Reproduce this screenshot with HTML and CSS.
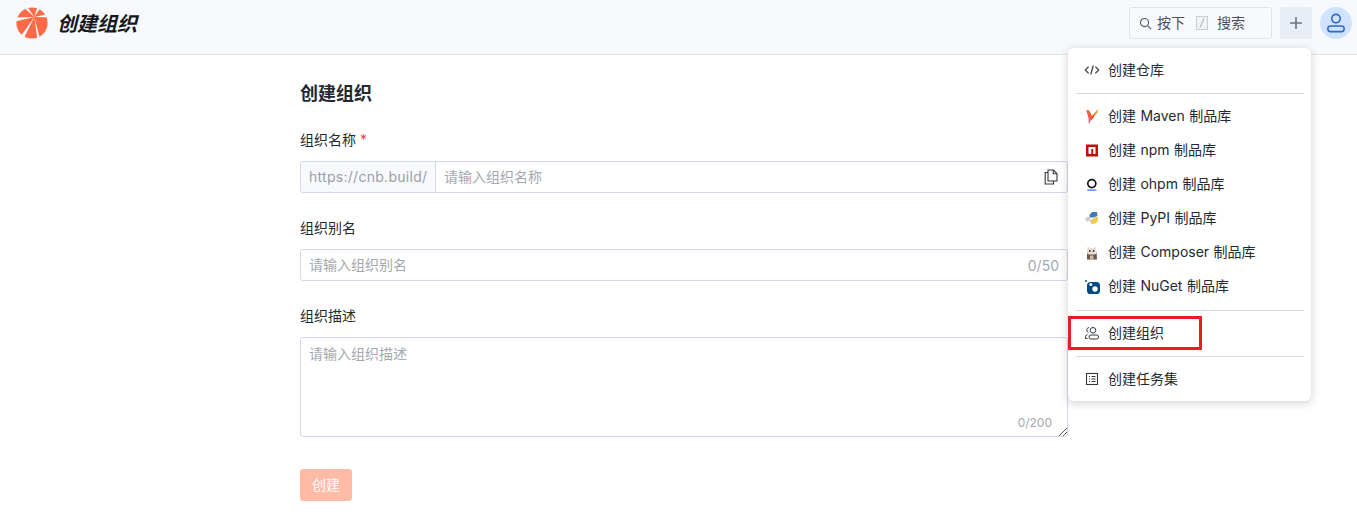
FILE: index.html
```html
<!DOCTYPE html>
<html lang="zh-CN">
<head>
<meta charset="utf-8">
<title>创建组织</title>
<link rel="stylesheet" href="styles.css">
</head>
<body>
<header class="topbar">
  <div class="brand">
    <svg class="logo" viewBox="0 0 32 32" width="32" height="32">
      <circle cx="16" cy="16" r="15.6" fill="#ff6b47"/>
      <g fill="#f7f9fd">
        <path d="M18.3 10 7.6 .2 11.2 -.4z"/>
        <path d="M18.3 10 21.4 -.2 24.4 .8z"/>
        <path d="M18.3 10 30.8 7.2 32.2 10.2z"/>
        <path d="M18.3 10 21.4 32 23.8 31.6z"/>
        <path d="M18.3 10 5.4 28.6 8.2 30.6z"/>
        <path d="M18.3 10 -.6 10.4 -.6 14.4z"/>
      </g>
    </svg>
    <span class="brand-title">创建组织</span>
  </div>
  <div class="actions">
    <div class="search">
      <svg viewBox="0 0 16 16" width="13" height="13" fill="none" stroke="#555b66" stroke-width="1.4"><circle cx="6.8" cy="6.8" r="5"/><path d="M10.6 10.6 15 15"/></svg>
      <span class="search-text">按下</span>
      <span class="slash"><svg viewBox="0 0 12 14" width="10" height="12" stroke="#9aa0a8" stroke-width="1"><path d="M3.5 12.5 8.5 1.5"/></svg></span>
      <span class="search-text">搜索</span>
    </div>
    <button class="plus" type="button">
      <svg viewBox="0 0 14 14" width="14" height="14" stroke="#6b7280" stroke-width="1.6"><path d="M7 1v12M1 7h12"/></svg>
    </button>
    <div class="avatar">
      <svg viewBox="0 0 20 20" width="20" height="20" fill="none" stroke="#2f69c9" stroke-width="1.6"><circle cx="10" cy="5.6" r="4.2"/><rect x="1.8" y="13" width="16.4" height="5.6" rx="2.8"/></svg>
    </div>
  </div>
</header>

<main class="page">
  <form class="form">
    <h1 class="form-title">创建组织</h1>
    <div class="field">
      <label class="label">组织名称 <em class="req">*</em></label>
      <div class="input url">
        <span class="prefix">https://cnb.build/</span>
        <span class="ph grow pad">请输入组织名称</span>
        <svg class="copy" viewBox="0 0 14 16" width="14" height="16" fill="none" stroke="#33383f" stroke-width="1.1"><path d="M4 1h5.5L13 4.6V12H4z"/><path d="M9.3 1v3.8H13"/><path d="M4 3.5H1.2V15H9.5v-3"/></svg>
      </div>
    </div>
    <div class="field">
      <label class="label">组织别名</label>
      <div class="input">
        <span class="ph grow pad">请输入组织别名</span>
        <span class="count">0/50</span>
      </div>
    </div>
    <div class="field">
      <label class="label">组织描述</label>
      <div class="textarea">
        <span class="ph">请输入组织描述</span>
        <span class="count-small">0/200</span>
        <svg class="grip" viewBox="0 0 9 9" width="9" height="9" stroke="#555" stroke-width="1"><path d="M1 9 9 1M5 9l4-4"/></svg>
      </div>
    </div>
    <button class="submit" type="button">创建</button>
  </form>
</main>

<nav class="menu">
  <a class="item">
    <svg viewBox="0 0 16 16" width="16" height="16" fill="none" stroke="#33383f" stroke-width="1.2"><path d="M4.6 4.6 1.4 8l3.2 3.4M11.4 4.6 14.6 8l-3.2 3.4M9.3 3.5 6.7 12.5"/></svg>
    <span>创建仓库</span>
  </a>
  <hr class="sep">
  <a class="item">
    <svg viewBox="0 0 16 16" width="16" height="16"><path fill="#e8603c" d="M2.2 2 5 2.2 8.4 8.5 6.8 12 4.8 11z"/><path fill="#d9628f" d="M4.6 10.5 6.8 11.5 5.6 15.5 4.6 15z"/><path fill="#ef9a3a" d="M14 1 13.4 4.6 7 12.4 6.4 9.6z"/><path fill="#e5484d" d="M11.2 5.2 9.4 9.8 7 12.4 6.6 9.8z"/></svg>
    <span>创建 Maven 制品库</span>
  </a>
  <a class="item">
    <svg viewBox="0 0 16 16" width="16" height="16"><rect x="2" y="2.5" width="12" height="12" fill="#c90a0d"/><path fill="#fff" d="M4.5 5h7v7H9.2V7H7.3v5H4.5z"/></svg>
    <span>创建 npm 制品库</span>
  </a>
  <a class="item">
    <svg viewBox="0 0 16 16" width="16" height="16"><circle cx="7.8" cy="7.6" r="4" fill="none" stroke="#111" stroke-width="1.7"/><rect x="3.2" y="13.4" width="9.2" height="1.5" fill="#5b8cf5"/></svg>
    <span>创建 ohpm 制品库</span>
  </a>
  <a class="item">
    <svg viewBox="0 0 16 16" width="16" height="16"><path fill="#c9ccd0" d="M1 8.5 4 6.5h3l-1 3.5-3 2z"/><path fill="#3f7cb5" d="M5.5 4.5 8.5 2h4.5l.5 4-4 1.5H6z"/><path fill="#f2c94c" d="M8 9 13 6.5l1.2 1.5-.8 4-3.4 2-3.5-.5z"/><path fill="#9fb4c9" d="M6 10h2l-1 3z"/></svg>
    <span>创建 PyPI 制品库</span>
  </a>
  <a class="item">
    <svg viewBox="0 0 16 16" width="16" height="16"><path fill="#6e5548" d="M3 8.5h9.5l.5 7H3z"/><path fill="#e8dfd4" d="M3.5 2.5 6 4h3.5l2.5-1.5.5 5.5a2.4 2.4 0 0 1-2.4 2.5H5.4A2.4 2.4 0 0 1 3 8z"/><circle cx="5.9" cy="7" r=".9" fill="#3a2c25"/><circle cx="9.6" cy="7" r=".9" fill="#3a2c25"/><rect x="6" y="11.5" width="3.5" height="3.5" fill="#c9b8a6"/></svg>
    <span>创建 Composer 制品库</span>
  </a>
  <a class="item">
    <svg viewBox="0 0 16 16" width="16" height="16"><rect x="3" y="4" width="13" height="12" rx="3.6" fill="#004880"/><circle cx="2" cy="3" r="1" fill="#004880"/><circle cx="6.8" cy="6.6" r="1.5" fill="#fff"/><circle cx="11" cy="11" r="2.7" fill="#fff"/></svg>
    <span>创建 NuGet 制品库</span>
  </a>
  <hr class="sep sep-mid">
  <a class="item">
    <svg viewBox="0 0 16 16" width="16" height="16" fill="none" stroke="#33383f" stroke-width="1"><circle cx="9" cy="5.3" r="2.8"/><rect x="5" y="10" width="9.5" height="4" rx="2"/><path d="M5 2.5a2.6 2.6 0 0 0-.6 5M3.5 9.6a2.2 2.2 0 0 0-2 2.2v1.7h2"/></svg>
    <span>创建组织</span>
  </a>
  <hr class="sep">
  <a class="item">
    <svg viewBox="0 0 16 16" width="16" height="16" fill="none" stroke="#33383f" stroke-width="1.1"><rect x="2.5" y="2.5" width="11" height="11"/><path d="M5 5.5h1M7.5 5.5h4M5 8h1M7.5 8h4M5 10.5h1M7.5 10.5h4"/></svg>
    <span>创建任务集</span>
  </a>
</nav>
<div class="highlight"></div>
</body>
</html>
```
FILE: styles.css
```css
* { box-sizing: border-box; }
html, body { margin: 0; padding: 0; }
body {
  height: 517px;
  overflow: hidden;
  background: #fff;
  color: #24292f;
  font-family: Inter, "Noto Sans CJK SC", sans-serif;
  font-size: 14px;
  position: relative;
}
.topbar {
  height: 55px;
  background: #f7f9fd;
  border-bottom: 1px solid #dfe3ea;
  display: flex;
  align-items: center;
  justify-content: space-between;
  padding: 0 5px 8px 16px;
}
.brand { display: flex; align-items: center; gap: 9px; }
.logo { display: block; }
.brand-title { padding-bottom: 2px; font-size: 20px; font-weight: 700; font-style: italic; color: #14171c; }
.actions { display: flex; align-items: center; gap: 8px; }
.search {
  width: 143px;
  height: 32px;
  border: 1px solid #dfe3ea;
  border-radius: 3px;
  display: flex;
  align-items: center;
  padding: 0 9px;
  color: #4c525c;
  font-size: 14px;
  gap: 5px;
}
.search-text { padding-bottom: 2px; }
.slash {
  width: 12px;
  height: 14px;
  border: 1px solid #c8ccd3;
  background: #f0f2f6;
  display: flex;
  align-items: center;
  justify-content: center;
  margin: 0 4px 0 6px;
  overflow: hidden;
}
.plus {
  width: 32px;
  height: 32px;
  border: 0;
  padding: 0;
  border-radius: 3px;
  background: #e9edf6;
  display: flex;
  align-items: center;
  justify-content: center;
}
.avatar {
  width: 32px;
  height: 32px;
  border-radius: 50%;
  background: #cfe2ff;
  display: flex;
  align-items: center;
  justify-content: center;
}
.page { display: flex; justify-content: flex-start; padding-left: 300px; }
.form { width: 768px; padding-top: 25px; }
.form-title { margin: 0 0 21px; font-size: 18px; line-height: 28px; font-weight: 700; color: #24292f; }
.field { margin-bottom: 24px; }
.label { display: block; height: 22px; line-height: 22px; margin-bottom: 10px; color: #24292f; font-size: 14px; }
.req { color: #e5484d; font-style: normal; }
.input {
  height: 32px;
  border: 1px solid #d3d8e6;
  border-radius: 3px;
  display: flex;
  align-items: center;
  background: #fff;
}
.prefix {
  height: 100%;
  display: flex;
  align-items: center;
  padding: 0 0 2px 8px;
  width: 135px;
  background: #f7f9fd;
  border-right: 1px solid #d3d8e6;
  color: #9a9fa8;
  border-radius: 3px 0 0 3px;
  white-space: nowrap;
  letter-spacing: .28px;
}
.ph { color: #a3a8b0; }
.grow { flex: 1; }
.pad { padding: 0 0 2px 8px; }
.copy { margin-right: 9px; }
.count { color: #a3a8b0; margin-right: 8px; }
.textarea {
  height: 100px;
  border: 1px solid #d3d8e6;
  border-radius: 3px;
  padding: 5px 8px;
  position: relative;
}
.count-small { position: absolute; right: 15px; bottom: 6px; font-size: 12px; color: #a3a8b0; }
.grip { position: absolute; right: 0; bottom: 0; }
.submit {
  display: block;
  margin-top: 32px;
  width: 52px;
  height: 32px;
  border: 0;
  padding: 0 0 2px;
  border-radius: 3px;
  background: #ffbba6;
  color: #fff;
  font: inherit;
}
.menu {
  position: absolute;
  left: 1068px;
  top: 48px;
  width: 243px;
  height: 353px;
  background: #fff;
  border-radius: 6px;
  box-shadow: 0 2px 10px rgba(30, 40, 60, .22);
  padding: 5px 7px 5px 8px;
  z-index: 2;
}
.item {
  height: 34px;
  display: flex;
  align-items: center;
  gap: 8px;
  padding-left: 8px;
  color: #24292f;
  font-size: 14px;
  white-space: nowrap;
}
.item span { padding-bottom: 2px; word-spacing: .5px; }
.sep { border: 0; height: 1px; background: #d6d9e4; margin: 6px 0 5px; }
.sep-mid { margin-top: 7px; }
.highlight {
  position: absolute;
  left: 1068px;
  top: 316px;
  width: 134px;
  height: 34px;
  border: 3px solid #ec1c24;
  z-index: 3;
}
```
